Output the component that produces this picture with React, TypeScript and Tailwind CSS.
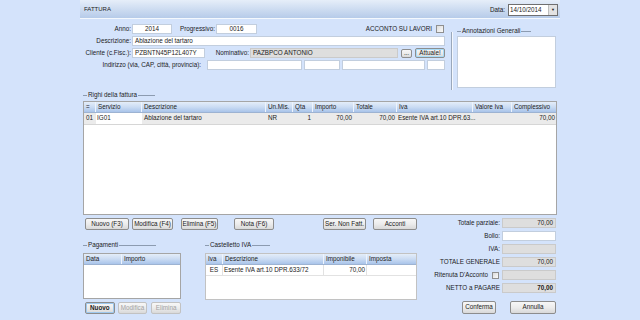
import clsx from "clsx";
import type { ReactNode } from "react";

type BoxProps = {
  className?: string;
  children?: ReactNode;
  grey?: boolean;
};

function Box({ className, children, grey }: BoxProps) {
  return (
    <div
      className={clsx(
        "h-[10px] flex items-center px-[2px] border whitespace-nowrap overflow-hidden",
        grey ? "bg-[#dedede] border-[#cacaca]" : "bg-white border-[#c2cede]",
        className
      )}
    >
      {children}
    </div>
  );
}

function Btn({ className, children, disabled, focus }: { className?: string; children: ReactNode; disabled?: boolean; focus?: boolean }) {
  return (
    <div
      className={clsx(
        "flex items-center justify-center rounded-[2px] border bg-linear-to-b from-[#f7f7f7] via-[#ececec] to-[#d9d9d9] whitespace-nowrap",
        disabled ? "text-[#a3a3a3] border-[#c2c2c2]" : "border-[#8d8d8d]",
        focus && "border-[#3a3a3a] shadow-[inset_0_0_0_1px_#9ec9ef]",
        className
      )}
    >
      {children}
    </div>
  );
}

function Check({ className }: { className?: string }) {
  return <div className={clsx("bg-linear-to-br from-[#dcdcdc] to-[#fafafa] border border-[#8f8f8f]", className)} />;
}

function GroupLabel({ text, post }: { text: string; post: string }) {
  return (
    <div className="h-[8px] flex items-center">
      <div className="w-[4px] h-px bg-[#8c9bb0]" />
      <span className="px-[1px]">{text}</span>
      <div className={clsx("h-px bg-[#8c9bb0]", post)} />
    </div>
  );
}

const headCls =
  "h-[11px] flex bg-linear-to-b from-[#e4edf9] via-[#cbdcf3] to-[#a9c4ea] border-b border-[#9db3d2]";
const hcell = "flex items-center px-[2px] border-r border-[#eef4fc] whitespace-nowrap";

export default function App() {
  return (
    <div className="w-[640px] h-[320px] bg-[#d4e3fb] overflow-hidden [font-family:'Liberation_Sans',Arial,sans-serif] text-[6.3px] leading-none text-[#1b1b1b]">
      <div className="mx-auto w-[480px] h-full">
        {/* header bar */}
        <div className="h-[19px] flex items-center justify-between pl-[4px] pr-[2px] bg-linear-to-b from-[#e6eef9] to-[#b6cbe9] border-b border-[#f4f8fd]">
          <span className="text-[6px]">FATTURA</span>
          <div className="flex items-center">
            <span className="mr-[3px] mt-[3px]">Data:</span>
            <div className="w-[50px] h-[12px] flex items-center bg-white border border-[#6f6f6f] mt-[2px]">
              <span className="flex-1 pl-[1px]">14/10/2014</span>
              <div className="w-[9px] h-full flex items-center justify-center bg-[#e3e3e3] border-l border-[#bdbdbd] text-[4px]">▼</div>
            </div>
          </div>
        </div>

        <div className="px-[3px]">
          {/* top form */}
          <div className="flex h-[72px]">
            <div className="w-[362px] pt-[5px] flex flex-col gap-[2px]">
              <div className="h-[10px] flex items-center">
                <span className="w-[48px] text-right">Anno:</span>
                <Box className="ml-[1px] w-[40px] justify-center">2014</Box>
                <span className="w-[43px] text-right">Progressivo:</span>
                <Box className="ml-[1px] w-[41px] justify-center">0016</Box>
                <span className="ml-auto">ACCONTO SU LAVORI</span>
                <Check className="ml-[4px] mr-[1px] w-[8px] h-[8px]" />
              </div>
              <div className="h-[10px] flex items-center">
                <span className="w-[48px] text-right">Descrizione:</span>
                <Box className="ml-[1px] flex-1">Ablazione del tartaro</Box>
              </div>
              <div className="h-[10px] flex items-center">
                <span className="w-[48px] text-right whitespace-nowrap">Cliente (c.Fisc.):</span>
                <Box className="ml-[1px] w-[73px]">PZBNTN45P12L407Y</Box>
                <span className="w-[44px] text-right">Nominativo:</span>
                <Box grey className="ml-[1px] w-[148px]">PAZBPCO ANTONIO</Box>
                <Btn className="ml-[3px] w-[11px] h-[9px]">...</Btn>
                <Btn className="ml-[3px] w-[30px] h-[10px] border-[#3d9be3] shadow-[inset_0_0_0_1px_#a8dcf8]">Attuale!</Btn>
              </div>
              <div className="h-[10px] flex items-center gap-[2px]">
                <span className="w-[118px] text-right whitespace-nowrap">Indirizzo (via, CAP, città, provincia):</span>
                <Box className="ml-[4px] w-[95px]" />
                <Box className="w-[36px]" />
                <Box className="w-[83px]" />
                <Box className="flex-1" />
              </div>
            </div>
            <div className="ml-[6px] mt-[13px] h-[58px] w-[2px] border-l border-[#9aa8bb] border-r border-r-[#f3f7fd]" />
            <div className="ml-[4px] w-[99px] pt-[8px]">
              <GroupLabel text="Annotazioni Generali" post="w-[10px]" />
              <div className="mt-[1px] h-[52px] bg-white border border-[#c2cede]" />
            </div>
          </div>

          {/* righi */}
          <GroupLabel text="Righi della fattura" post="w-[17px]" />
          <div className="mt-[2px] h-[114px] bg-white border border-[#a5a5a5] flex flex-col">
            <div className={headCls}>
              <div className={clsx(hcell, "w-[12px]")}>=</div>
              <div className={clsx(hcell, "w-[46px]")}>Servizio</div>
              <div className={clsx(hcell, "w-[124px]")}>Descrizione</div>
              <div className={clsx(hcell, "w-[27px]")}>Un.Mis.</div>
              <div className={clsx(hcell, "w-[20px]")}>Qta</div>
              <div className={clsx(hcell, "w-[41px]")}>Importo</div>
              <div className={clsx(hcell, "w-[43px]")}>Totale</div>
              <div className={clsx(hcell, "w-[76px]")}>Iva</div>
              <div className={clsx(hcell, "w-[39px]")}>Valore Iva</div>
              <div className={clsx(hcell, "flex-1 border-r-0")}>Complessivo</div>
            </div>
            <div className="h-[12px] flex bg-[#ebebeb] border-b border-[#d6d6d6]">
              <div className="w-[12px] flex items-center px-[2px]">01</div>
              <div className="w-[46px] flex items-center px-[1px] bg-white">IG01</div>
              <div className="w-[124px] flex items-center px-[2px]">Ablazione del tartaro</div>
              <div className="w-[27px] flex items-center px-[2px]">NR</div>
              <div className="w-[20px] flex items-center justify-end px-[2px]">1</div>
              <div className="w-[41px] flex items-center justify-end px-[2px]">70,00</div>
              <div className="w-[43px] flex items-center justify-end px-[2px]">70,00</div>
              <div className="w-[76px] flex items-center px-[1px] whitespace-nowrap">Esente IVA art.10 DPR.63...</div>
              <div className="w-[39px]" />
              <div className="flex-1 flex items-center justify-end px-[1px]">70,00</div>
            </div>
          </div>

          {/* bottom */}
          <div className="mt-[3px] flex">
            <div className="w-[337px]">
              <div className="h-[12px] flex pl-[2px]">
                <Btn className="w-[44px]">Nuovo (F3)</Btn>
                <Btn className="ml-[3px] w-[41px]">Modifica (F4)</Btn>
                <Btn className="ml-[8px] w-[37px]">Elimina (F5)</Btn>
                <Btn className="ml-[16px] w-[40px]">Nota (F6)</Btn>
                <Btn className="ml-[49px] w-[43px]">Ser. Non Fatt.</Btn>
                <Btn className="ml-[7px] w-[44px]">Acconti</Btn>
              </div>
              <div className="mt-[11px] flex">
                <div className="w-[98px]">
                  <GroupLabel text="Pagamenti" post="w-[37px]" />
                  <div className="mt-[4px] h-[46px] bg-white border border-[#a5a5a5]">
                    <div className={headCls}>
                      <div className={clsx(hcell, "w-[38px]")}>Data</div>
                      <div className={clsx(hcell, "flex-1 border-r-0")}>Importo</div>
                    </div>
                  </div>
                  <div className="mt-[3px] h-[12px] flex pl-[2px]">
                    <Btn focus className="w-[30px] font-bold">Nuovo</Btn>
                    <Btn disabled className="ml-[3px] w-[30px]">Modifica</Btn>
                    <Btn disabled className="ml-[4px] w-[30px]">Elimina</Btn>
                  </div>
                </div>
                <div className="ml-[24px] w-[212px]">
                  <GroupLabel text="Castelletto IVA" post="w-[18px]" />
                  <div className="mt-[4px] h-[47px] bg-white border border-[#c2c2c2]">
                    <div className={headCls}>
                      <div className={clsx(hcell, "w-[17px]")}>Iva</div>
                      <div className={clsx(hcell, "w-[101px]")}>Descrizione</div>
                      <div className={clsx(hcell, "w-[43px]")}>Imponibile</div>
                      <div className={clsx(hcell, "flex-1 border-r-0")}>Imposta</div>
                    </div>
                    <div className="h-[11px] flex border-b border-[#e2e2e2]">
                      <div className="w-[17px] flex items-center justify-center border-r border-[#e2e2e2]">ES</div>
                      <div className="w-[101px] flex items-center px-[1px] border-r border-[#e2e2e2]">Esente IVA art.10 DPR.633/72</div>
                      <div className="w-[43px] flex items-center justify-end px-[1px] border-r border-[#e2e2e2]">70,00</div>
                      <div className="flex-1" />
                    </div>
                  </div>
                </div>
              </div>
            </div>

            <div className="flex-1 pr-[1px] flex flex-col">
              <div className="flex flex-col gap-[3px]">
                <div className="h-[10px] flex items-center justify-end">
                  <span>Totale parziale:</span>
                  <Box grey className="ml-[2px] w-[54px] justify-end">70,00</Box>
                </div>
                <div className="h-[10px] flex items-center justify-end">
                  <span>Bollo:</span>
                  <Box className="ml-[2px] w-[54px]" />
                </div>
                <div className="h-[10px] flex items-center justify-end">
                  <span>IVA:</span>
                  <Box grey className="ml-[2px] w-[54px]" />
                </div>
                <div className="h-[10px] flex items-center justify-end">
                  <span>TOTALE GENERALE</span>
                  <Box grey className="ml-[2px] w-[54px] justify-end">70,00</Box>
                </div>
                <div className="h-[10px] flex items-center justify-end">
                  <span>Ritenuta D&apos;Acconto</span>
                  <Check className="ml-[4px] w-[7px] h-[7px]" />
                  <Box grey className="ml-[3px] w-[54px]" />
                </div>
                <div className="h-[10px] flex items-center justify-end">
                  <span>NETTO a PAGARE</span>
                  <Box grey className="ml-[2px] w-[54px] justify-end font-bold">70,00</Box>
                </div>
              </div>
              <div className="mt-[8px] flex justify-end gap-[14px]">
                <Btn className="w-[34px] h-[13px]">Conferma</Btn>
                <Btn className="w-[46px] h-[13px]">Annulla</Btn>
              </div>
            </div>
          </div>
        </div>
      </div>
    </div>
  );
}
